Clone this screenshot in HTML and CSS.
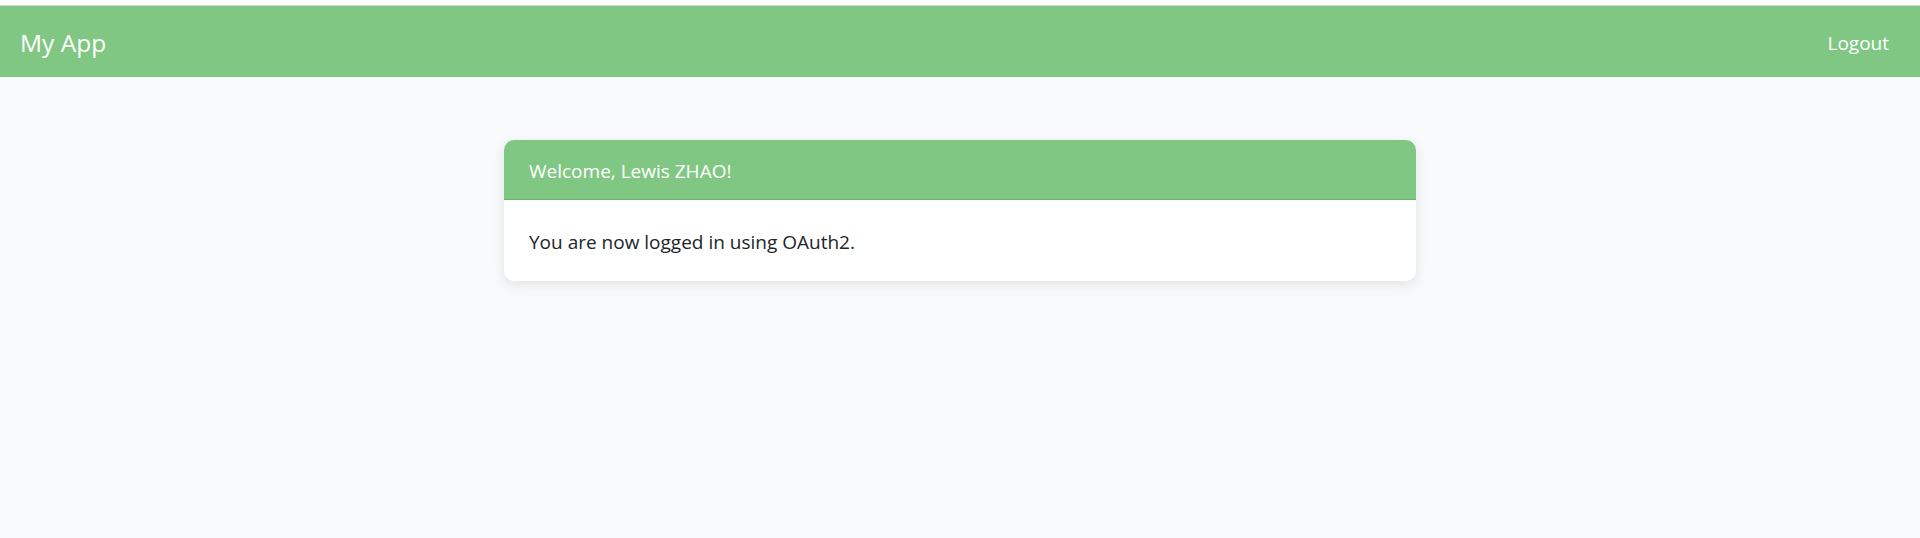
FILE: index.html
```html
<!DOCTYPE html>
<html lang="en">
<head>
<meta charset="utf-8">
<title>My App</title>
<link rel="stylesheet" href="styles.css">
</head>
<body>
<div class="topstrip"></div>
<nav class="navbar">
  <a class="brand" href="#">My App</a>
  <a class="nav-link" href="#">Logout</a>
</nav>
<main class="main">
  <div class="card">
    <div class="card-header">Welcome, Lewis ZHAO!</div>
    <div class="card-body">You are now logged in using OAuth2.</div>
  </div>
</main>
</body>
</html>
```

FILE: styles.css
```css
html, body {
  margin: 0;
  padding: 0;
}
body {
  background: #f8f9fa;
  font-family: "Segoe UI", "Open Sans", "Noto Sans", sans-serif;
  font-size: 20px;
  line-height: 30px;
  color: #212529;
  min-height: 538px;
}
.topstrip {
  height: 5px;
  background: #ffffff;
  border-bottom: 1px solid #d4d4d4;
}
.navbar {
  height: 71px;
  background: #81c784;
  display: flex;
  align-items: center;
  justify-content: space-between;
  padding: 2px 31px 0 20px;
  box-sizing: border-box;
}
.brand {
  color: #ffffff;
  text-decoration: none;
  font-size: 24.5px;
  line-height: 36px;
}
.nav-link {
  color: #ffffff;
  text-decoration: none;
  font-size: 19px;
}
.main {
  display: flex;
  justify-content: center;
  padding-top: 63px;
}
.card {
  width: 912px;
  background: #ffffff;
  border-radius: 10px;
  box-shadow: 0 4px 12px rgba(0, 0, 0, 0.09);
  overflow: hidden;
}
.card-header {
  background: #81c784;
  color: #ffffff;
  padding: 16px 25px 13px;
  font-size: 19px;
  border-bottom: 1px solid #6fae72;
}
.card-body {
  padding: 27px 25px 24px;
  font-size: 19px;
}
```
